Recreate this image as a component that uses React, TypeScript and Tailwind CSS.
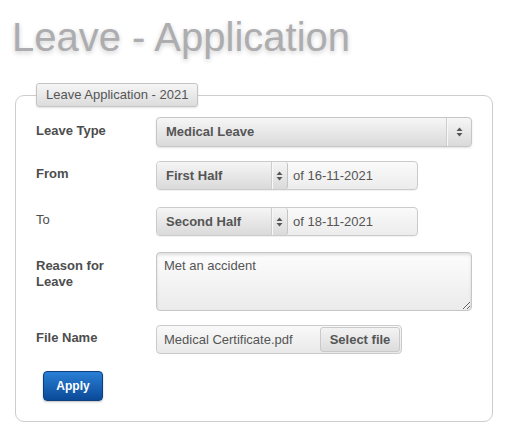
import React from 'react'

function Arrows() {
  return (
    <svg width="7" height="10" viewBox="0 0 7 10" className="text-[#555]">
      <path d="M3.5 0.5 L6.5 4 H0.5 Z" fill="currentColor" />
      <path d="M3.5 9.5 L6.5 6 H0.5 Z" fill="currentColor" />
    </svg>
  )
}

function Label({ children, className = '' }: { children: React.ReactNode; className?: string }) {
  return (
    <label className={`w-[120px] shrink-0 pr-5 text-[13px] leading-4 text-[#4d4d4d] ${className}`}>
      {children}
    </label>
  )
}

function HalfSelect({ value, date }: { value: string; date: string }) {
  return (
    <div className="flex h-[29px] w-[262px] items-center rounded-[4px] border border-[#cbcbcb] bg-gradient-to-b from-[#fafafa] to-[#ececec] shadow-[0_1px_1px_rgba(0,0,0,0.06)]">
      <div className="flex h-full w-[131px] items-center rounded-[3px] border-r border-[#c4c4c4] bg-gradient-to-b from-[#f5f5f5] to-[#dadada]">
        <span className="flex-1 pl-[9px] text-[13px] font-bold text-[#555]">{value}</span>
        <div className="h-full w-px bg-[#cdcdcd] shadow-[1px_0_0_#f8f8f8]" />
        <div className="flex w-[15px] items-center justify-center">
          <Arrows />
        </div>
      </div>
      <span className="pl-[5px] text-[13px] text-[#555]">of&nbsp;{date}</span>
    </div>
  )
}

export default function App() {
  return (
    <div className="min-h-screen bg-white font-['Liberation_Sans',Arial,sans-serif]">
      <h1 className="pl-3 pt-[17px] text-[40px] leading-[40px] text-[#adadaf] [text-shadow:0_2px_5px_rgba(0,0,0,0.2)]">
        Leave - Application
      </h1>

      <fieldset className="ml-[15px] mt-[26px] w-[477px] rounded-[9px] border border-[#cdcdcd] px-5 pb-5 pt-[10px]">
        <legend className="h-6 rounded-[3px] border border-[#c4c4c4] bg-gradient-to-b from-[#f6f6f6] to-[#dcdcdc] px-[9px] text-[13px] leading-[22px] text-[#555] shadow-[0_1px_2px_rgba(0,0,0,0.12)]">
          Leave Application - 2021
        </legend>

        <div className="flex items-start">
          <Label className="pt-[6px] font-bold">Leave Type</Label>
          <div className="flex h-[30px] w-[316px] items-center rounded-[4px] border border-[#c6c6c6] bg-gradient-to-b from-[#f6f6f6] to-[#dadada] shadow-[0_1px_2px_rgba(0,0,0,0.12)]">
            <span className="flex-1 pl-[9px] text-[13px] font-bold text-[#555]">Medical Leave</span>
            <div className="h-full w-px bg-[#cdcdcd] shadow-[1px_0_0_#f8f8f8]" />
            <div className="flex w-[24px] items-center justify-center">
              <Arrows />
            </div>
          </div>
        </div>

        <div className="mt-[14px] flex items-start">
          <Label className="pt-[5px] font-bold">From</Label>
          <HalfSelect value="First Half" date="16-11-2021" />
        </div>

        <div className="mt-[17px] flex items-start">
          <Label className="pt-[5px]">To</Label>
          <HalfSelect value="Second Half" date="18-11-2021" />
        </div>

        <div className="mt-4 flex items-start">
          <Label className="pt-[6px] font-bold">Reason for Leave</Label>
          <textarea
            defaultValue="Met an accident"
            className="h-[59px] w-[316px] rounded-[4px] border border-[#c6c6c6] bg-gradient-to-b from-[#fdfdfd] to-[#ebebeb] px-[7px] pt-[5px] text-[13px] leading-4 text-[#555] shadow-[inset_0_2px_3px_rgba(0,0,0,0.12)] outline-none"
          />
        </div>

        <div className="mt-[14px] flex items-start">
          <Label className="pt-[5px] font-bold">File Name</Label>
          <div className="flex h-[29px] w-[246px] items-center rounded-[4px] border border-[#cbcbcb] bg-gradient-to-b from-[#f9f9f9] to-[#e9e9e9]">
            <span className="flex-1 pl-[7px] text-[13px] text-[#555]">Medical Certificate.pdf</span>
            <button
              type="button"
              className="mr-px flex h-[25px] w-[80px] items-center justify-center rounded-[3px] border border-[#c9c9c9] bg-gradient-to-b from-[#f3f3f3] to-[#dcdcdc] text-[13px] font-bold text-[#555]"
            >
              Select file
            </button>
          </div>
        </div>

        <button
          type="button"
          className="ml-[7px] mt-[17px] flex h-[30px] w-[60px] items-center justify-center rounded-[4px] border border-[#0b3f7f] bg-gradient-to-b from-[#2a7fd6] to-[#0a4a98] text-[12px] font-bold text-white shadow-[0_1px_2px_rgba(0,0,0,0.25)]"
        >
          Apply
        </button>
      </fieldset>
    </div>
  )
}
